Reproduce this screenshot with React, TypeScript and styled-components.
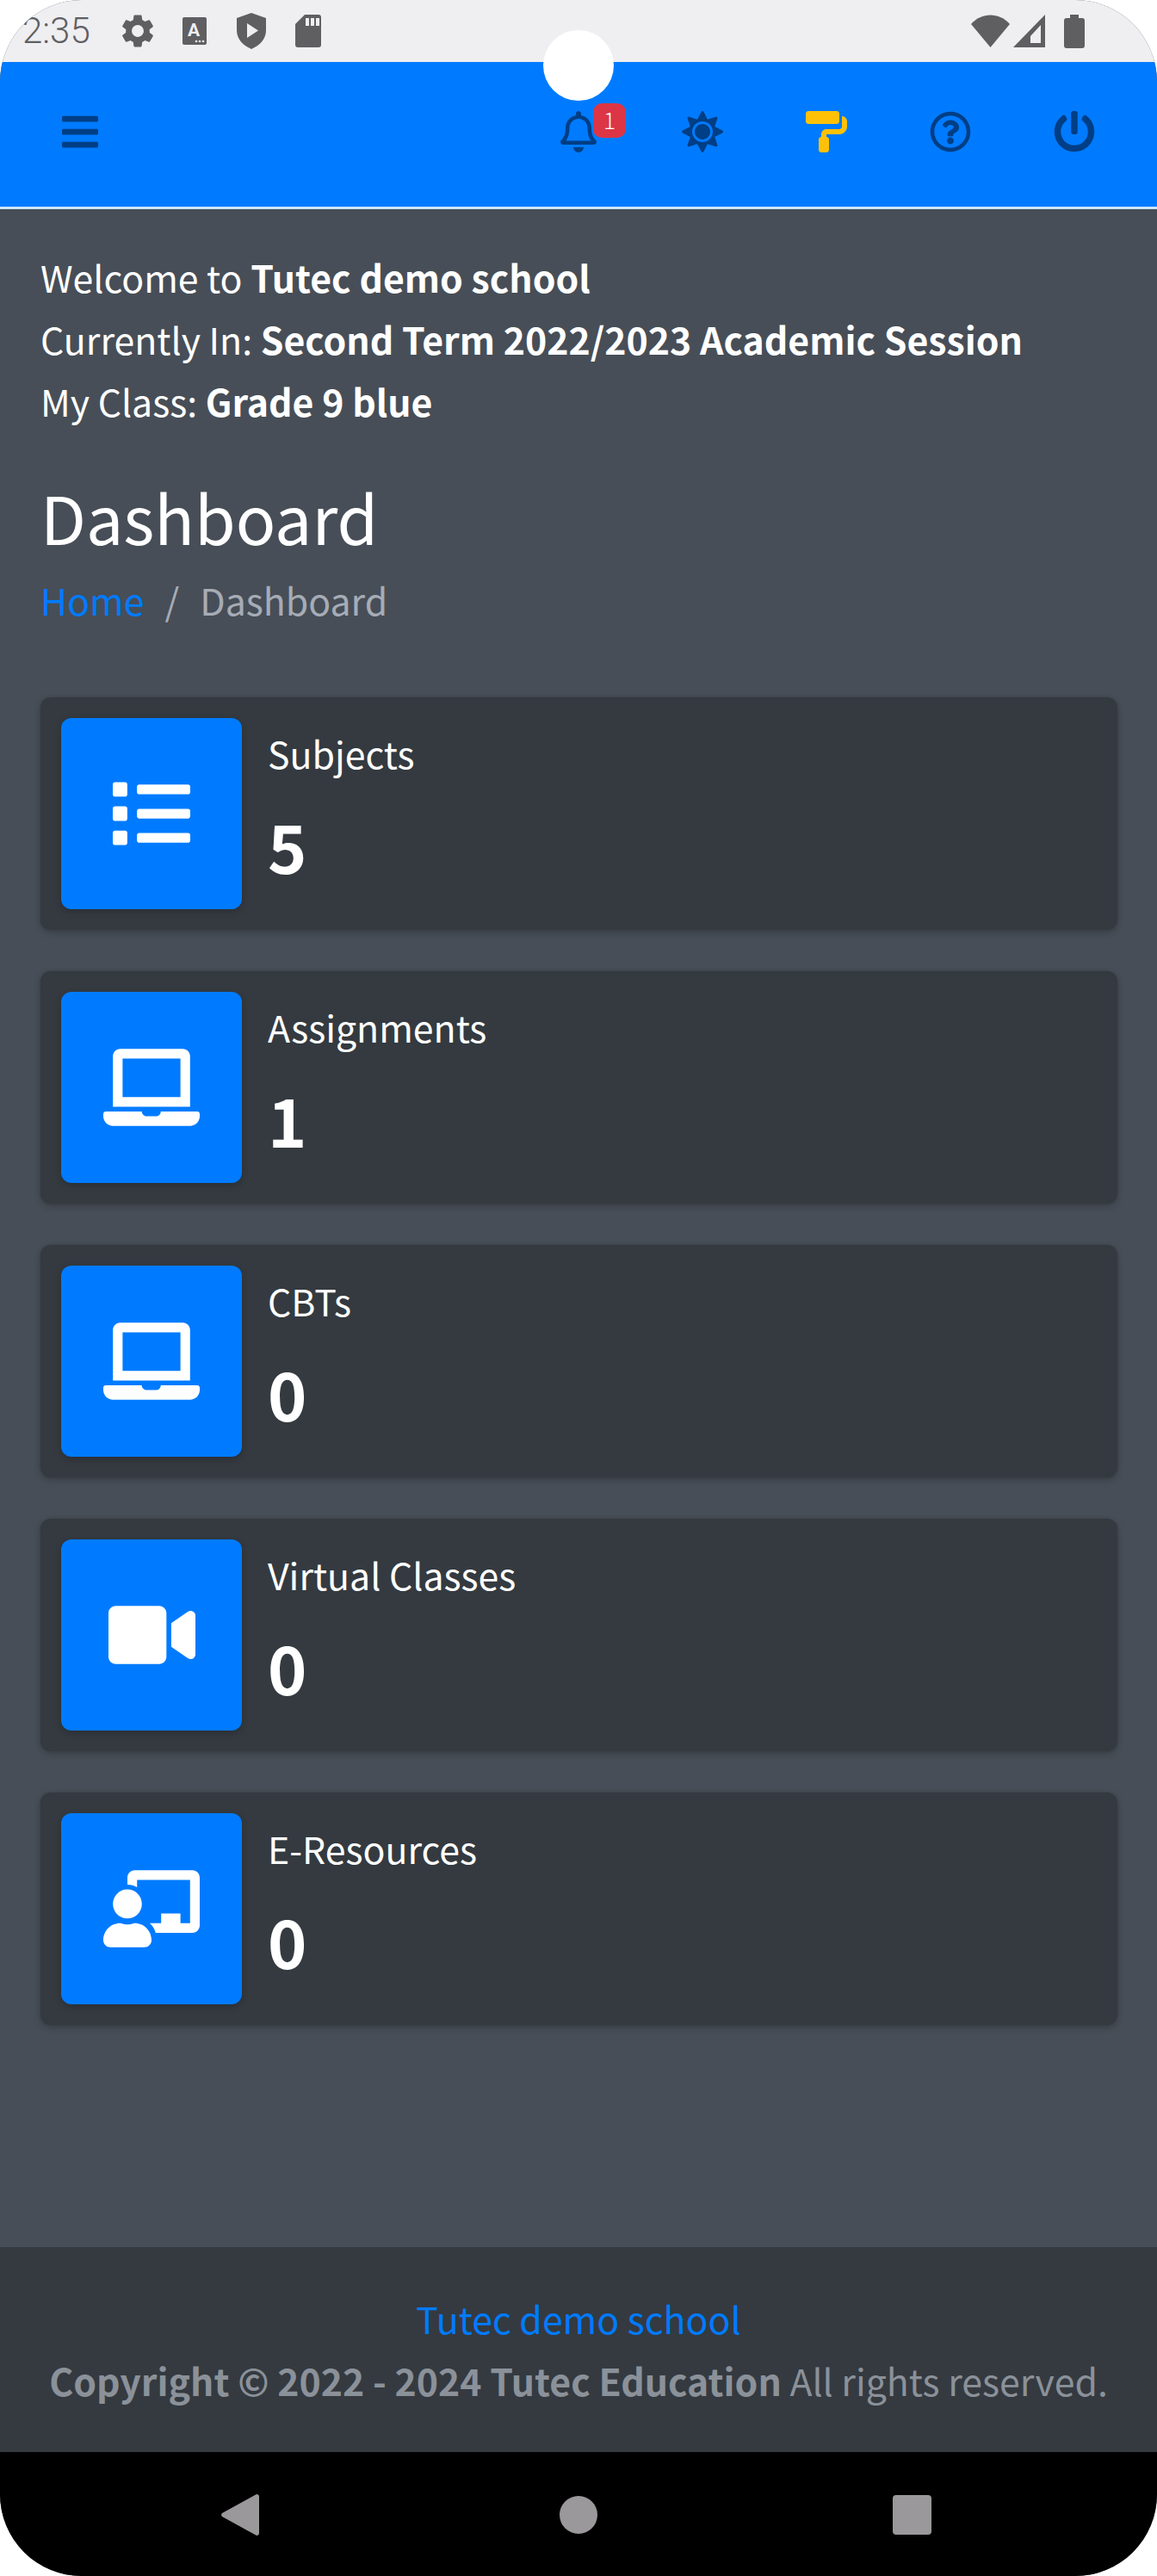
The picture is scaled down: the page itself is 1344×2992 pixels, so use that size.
import React from "react";
import styled, { createGlobalStyle } from "styled-components";
import {
  FaBars,
  FaChalkboardTeacher,
  FaLaptop,
  FaList,
  FaPaintRoller,
  FaPowerOff,
  FaRegBell,
  FaRegQuestionCircle,
  FaSun,
  FaVideo,
} from "react-icons/fa";
import { MdSettings } from "react-icons/md";

const GlobalStyle = createGlobalStyle`
  html, body {
    margin: 0;
    padding: 0;
    background: #fff;
  }
  * {
    box-sizing: border-box;
  }
  body {
    font-family: "Noto Sans CJK SC", "Noto Sans", sans-serif;
    font-size: 42.8px;
    color: #fff;
  }
`;

const STAT_CARDS = [
  { label: "Subjects", value: 5, icon: <FaList />, iconWidth: 90 },
  { label: "Assignments", value: 1, icon: <FaLaptop />, iconWidth: 112 },
  { label: "CBTs", value: 0, icon: <FaLaptop />, iconWidth: 112 },
  { label: "Virtual Classes", value: 0, icon: <FaVideo />, iconWidth: 101 },
  { label: "E-Resources", value: 0, icon: <FaChalkboardTeacher />, iconWidth: 112 },
];

const App = () => {
  return (
    <>
      <GlobalStyle />
      <Screen>
        <CameraHole />
        <StatusBar>
          <Clock>2:35</Clock>
          <StatusSlot>
            <MdSettings size={46} />
          </StatusSlot>
          <StatusSlot>
            <svg width="28" height="32" viewBox="0 0 28 32">
              <rect width="28" height="32" rx="2" fill="#5f5f62" />
              <text x="13" y="22" fontSize="21" fontWeight="700" textAnchor="middle" fill="#efeef1" fontFamily="Roboto, sans-serif">A</text>
              <circle cx="16" cy="28" r="1.3" fill="#efeef1" />
              <circle cx="20" cy="28" r="1.3" fill="#efeef1" />
              <circle cx="24" cy="28" r="1.3" fill="#efeef1" />
            </svg>
          </StatusSlot>
          <StatusSlot>
            <svg width="34" height="42" viewBox="0 0 34 42">
              <path d="M17 0L34 6V20C34 31 26 38 17 42C8 38 0 31 0 20V6Z" fill="#5f5f62" />
              <path d="M12 12L25 20.500L12 29Z" fill="#efeef1" />
            </svg>
          </StatusSlot>
          <StatusSlot>
            <svg width="30" height="38" viewBox="0 0 30 38">
              <path d="M11 0H27a3 3 0 0 1 3 3V35a3 3 0 0 1-3 3H3a3 3 0 0 1-3-3V11Z" fill="#5f5f62" />
              <rect x="12" y="4" width="4" height="9" fill="#efeef1" />
              <rect x="18" y="4" width="4" height="9" fill="#efeef1" />
              <rect x="24" y="4" width="4" height="9" fill="#efeef1" />
            </svg>
          </StatusSlot>
          <StatusRight>
            <svg width="45" height="38" viewBox="0 0 45 38">
              <path d="M0 11C12 -3 33 -3 45 11L22.500 38Z" fill="#5f5f62" />
            </svg>
            <svg width="37" height="38" viewBox="0 0 37 38">
              <path d="M37 0V38H0ZM32 12L20 25V33H32Z" fill="#5f5f62" fillRule="evenodd" />
            </svg>
            <BatteryGap>
              <svg width="24" height="39" viewBox="0 0 24 39">
                <path d="M7 0H17V4H21a3 3 0 0 1 3 3V36a3 3 0 0 1-3 3H3a3 3 0 0 1-3-3V7a3 3 0 0 1 3-3H7Z" fill="#5f5f62" />
              </svg>
            </BatteryGap>
          </StatusRight>
        </StatusBar>

        <Navbar>
          <NavToggle>
            <FaBars />
          </NavToggle>
          <NavItems>
            <NavItem>
              <FaRegBell />
              <NotifyBadge>1</NotifyBadge>
            </NavItem>
            <NavItem>
              <FaSun />
            </NavItem>
            <NavItem $color="#ffc107">
              <FaPaintRoller />
            </NavItem>
            <NavItem>
              <FaRegQuestionCircle />
            </NavItem>
            <NavItem>
              <FaPowerOff />
            </NavItem>
          </NavItems>
        </Navbar>

        <Content>
          <WelcomeLine>
            Welcome to <b>Tutec demo school</b>
          </WelcomeLine>
          <WelcomeLine>
            Currently In: <b>Second Term 2022/2023 Academic Session</b>
          </WelcomeLine>
          <WelcomeLine>
            My Class: <b>Grade 9 blue</b>
          </WelcomeLine>
          <PageTitle>Dashboard</PageTitle>
          <Breadcrumb>
            <BlueLink>Home</BlueLink>
            <Slash>/</Slash>
            <span>Dashboard</span>
          </Breadcrumb>
          <CardList>
            {STAT_CARDS.map((card) => (
              <InfoBox key={card.label}>
                <InfoIcon $iconWidth={card.iconWidth}>{card.icon}</InfoIcon>
                <InfoText>
                  <InfoLabel>{card.label}</InfoLabel>
                  <InfoNumber>{card.value}</InfoNumber>
                </InfoText>
              </InfoBox>
            ))}
          </CardList>
        </Content>

        <Footer>
          <BlueLink>Tutec demo school</BlueLink>
          <div>
            <b>Copyright © 2022 - 2024 Tutec Education</b> All rights reserved.
          </div>
        </Footer>

        <SystemNav>
          <NavSlot>
            <svg width="44" height="48" viewBox="0 0 44 48">
              <path d="M41 0a3 3 0 0 1 3 3V45a3 3 0 0 1-3 3L1 26a3 3 0 0 1 0-4Z" fill="#9a989a" />
            </svg>
          </NavSlot>
          <NavSlot>
            <HomeDot />
          </NavSlot>
          <NavSlot>
            <RecentSquare />
          </NavSlot>
        </SystemNav>
      </Screen>
    </>
  );
};

const Screen = styled.div`
  position: relative;
  display: flex;
  flex-direction: column;
  width: 1344px;
  height: 2992px;
  border-radius: 95px;
  overflow: hidden;
  background: #474e57;
`;

const CameraHole = styled.div`
  position: absolute;
  top: 35px;
  left: 631px;
  width: 82px;
  height: 82px;
  border-radius: 50%;
  background: #fff;
`;

const StatusBar = styled.div`
  display: flex;
  align-items: center;
  flex: none;
  height: 72px;
  padding-left: 26px;
  background: #efeef1;
  color: #5f5f62;
`;

const Clock = styled.div`
  width: 101px;
  font-family: Roboto, sans-serif;
  font-size: 42px;
  font-weight: 300;
  line-height: 72px;
`;

const StatusSlot = styled.div`
  display: flex;
  justify-content: center;
  align-items: center;
  width: 66px;
  height: 72px;
`;

const StatusRight = styled.div`
  display: flex;
  align-items: center;
  gap: 4px;
  margin-left: auto;
  padding-right: 84px;
`;

const BatteryGap = styled.div`
  display: flex;
  margin-left: 18px;
`;

const Navbar = styled.nav`
  display: flex;
  align-items: center;
  justify-content: space-between;
  flex: none;
  height: 171px;
  padding: 0 24px 6px 69px;
  background: #007bff;
  border-bottom: 3px solid #cfe6ff;
  color: #003e85;
  font-size: 48px;
`;

const NavToggle = styled.div`
  display: flex;
`;

const NavItems = styled.div`
  display: flex;
`;

const NavItem = styled.div<{ $color?: string }>`
  position: relative;
  display: flex;
  justify-content: center;
  align-items: center;
  width: 144px;
  height: 60px;
  color: ${({ $color }) => $color || "inherit"};
`;

const NotifyBadge = styled.span`
  position: absolute;
  top: -3px;
  left: 89px;
  width: 38px;
  height: 40px;
  border-radius: 10px;
  background: #dc3545;
  color: #fff;
  font-size: 27px;
  font-weight: 300;
  line-height: 38px;
  text-align: center;
`;

const Content = styled.main`
  flex: 1;
  padding: 42px 46px 0 47px;
`;

const WelcomeLine = styled.div`
  line-height: 72px;
`;

const PageTitle = styled.h1`
  margin: 49px 0 0;
  font-size: 77px;
  font-weight: 400;
  line-height: 100px;
`;

const Breadcrumb = styled.div`
  display: flex;
  margin-top: 10px;
  line-height: 72px;
  color: #a6acb6;
`;

const BlueLink = styled.span`
  color: #007bff;
`;

const Slash = styled.span`
  padding: 0 24px;
`;

const CardList = styled.div`
  display: flex;
  flex-direction: column;
  gap: 48px;
  margin-top: 78px;
`;

const InfoBox = styled.div`
  display: flex;
  gap: 30px;
  height: 270px;
  padding: 24px;
  border-radius: 12px;
  background: #343a40;
  box-shadow: 0 0 3px rgba(0, 0, 0, 0.125), 0 3px 9px rgba(0, 0, 0, 0.2);
`;

const InfoIcon = styled.div<{ $iconWidth: number }>`
  display: flex;
  justify-content: center;
  align-items: center;
  flex: none;
  width: 210px;
  height: 222px;
  border-radius: 12px;
  background: #007bff;
  box-shadow: 0 3px 9px rgba(0, 0, 0, 0.2);
  color: #fff;

  svg {
    width: ${({ $iconWidth }) => $iconWidth}px;
    height: 90px;
  }
`;

const InfoText = styled.div`
  display: flex;
  flex-direction: column;
`;

const InfoLabel = styled.div`
  line-height: 80px;
`;

const InfoNumber = styled.div`
  font-size: 77px;
  font-weight: 700;
  line-height: 136px;
`;

const Footer = styled.footer`
  display: flex;
  flex-direction: column;
  justify-content: center;
  flex: none;
  height: 238px;
  padding-bottom: 2px;
  background: #343a40;
  color: #8b9199;
  line-height: 72px;
  text-align: center;
`;

const SystemNav = styled.div`
  display: grid;
  grid-template-columns: 396px 390px 384px;
  flex: none;
  height: 144px;
  padding: 49px 0 0 81px;
  background: #000;
`;

const NavSlot = styled.div`
  display: flex;
  justify-content: center;
  height: 48px;
  align-items: center;
`;

const HomeDot = styled.div`
  width: 44px;
  height: 44px;
  border-radius: 50%;
  background: #9a989a;
`;

const RecentSquare = styled.div`
  width: 45px;
  height: 46px;
  border-radius: 4px;
  background: #9a989a;
`;

export default App;
